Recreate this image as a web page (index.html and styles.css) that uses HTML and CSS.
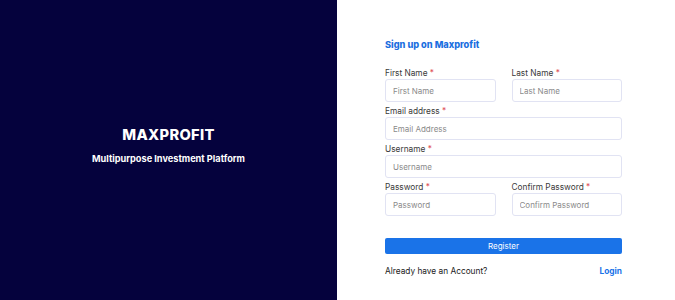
FILE: index.html
```html
<!DOCTYPE html>
<html>
<head>
<meta charset="utf-8">
<link rel="stylesheet" href="styles.css">
</head>
<body>
<div class="page">
  <div class="brand">
    <div class="brand-name">MAXPROFIT</div>
    <div class="brand-tag">Multipurpose Investment Platform</div>
  </div>
  <div class="side">
    <form class="form">
      <h1 class="title">Sign up on Maxprofit</h1>
      <div class="row">
        <div class="field">
          <label>First Name <span class="req">*</span></label>
          <input placeholder="First Name">
        </div>
        <div class="field">
          <label>Last Name <span class="req">*</span></label>
          <input placeholder="Last Name">
        </div>
      </div>
      <div class="field">
        <label>Email address <span class="req">*</span></label>
        <input placeholder="Email Address">
      </div>
      <div class="field">
        <label>Username <span class="req">*</span></label>
        <input placeholder="Username">
      </div>
      <div class="row">
        <div class="field">
          <label>Password <span class="req">*</span></label>
          <input placeholder="Password">
        </div>
        <div class="field">
          <label>Confirm Password <span class="req">*</span></label>
          <input placeholder="Confirm Password">
        </div>
      </div>
      <button type="button" class="btn">Register</button>
      <div class="foot">
        <span>Already have an Account?</span>
        <a class="login">Login</a>
      </div>
    </form>
  </div>
</div>
</body>
</html>
```
FILE: styles.css
```css
* { box-sizing: border-box; }
html, body { margin: 0; padding: 0; }
body {
  font-family: "Inter", "Open Sans", "Liberation Sans", sans-serif;
  width: 675px;
  height: 300px;
  overflow: hidden;
}
.page {
  display: flex;
  height: 300px;
}
.brand {
  width: 337px;
  background: #05023d;
  color: #fff;
  display: flex;
  flex-direction: column;
  align-items: center;
  justify-content: center;
  padding-bottom: 10px;
}
.brand-name {
  font-size: 14.7px;
  font-weight: 800;
  letter-spacing: 0.3px;
  line-height: 18px;
}
.brand-tag {
  font-size: 9.2px;
  font-weight: 700;
  margin-top: 9px;
  line-height: 11px;
}
.side {
  flex: 1;
  background: #fff;
  padding: 39px 0 0 48px;
}
.form {
  width: 237px;
  display: flex;
  flex-direction: column;
}
.title {
  margin: 0 0 17px;
  font-size: 9.2px;
  font-weight: 800;
  color: #1b6fe0;
  line-height: 12px;
}
.row {
  display: flex;
  gap: 16px;
}
.row .field { flex: 1; min-width: 0; }
.field {
  display: flex;
  flex-direction: column;
  margin-bottom: 4px;
}
label {
  font-size: 8.3px;
  color: #3a3a3a;
  margin-bottom: 1px;
  line-height: 10px;
  height: 10px;
}
.req { color: #e0505a; }
input {
  width: 100%;
  min-width: 0;
  height: 23px;
  border: 1px solid #e1e3f3;
  border-radius: 3px;
  padding: 0 7px;
  font: inherit;
  font-size: 8px;
  color: #333;
  outline: none;
  margin: 0;
}
input::placeholder { color: #8a8a8a; }
.btn {
  margin-top: 18px;
  height: 16px;
  border: none;
  border-radius: 2px;
  background: #1a73e8;
  color: #fff;
  font: inherit;
  font-size: 8px;
  padding: 0;
}
.foot {
  display: flex;
  justify-content: space-between;
  margin-top: 12px;
  font-size: 8.3px;
  line-height: 10px;
  color: #222;
}
.login {
  color: #1a73e8;
  font-weight: 700;
}
```
